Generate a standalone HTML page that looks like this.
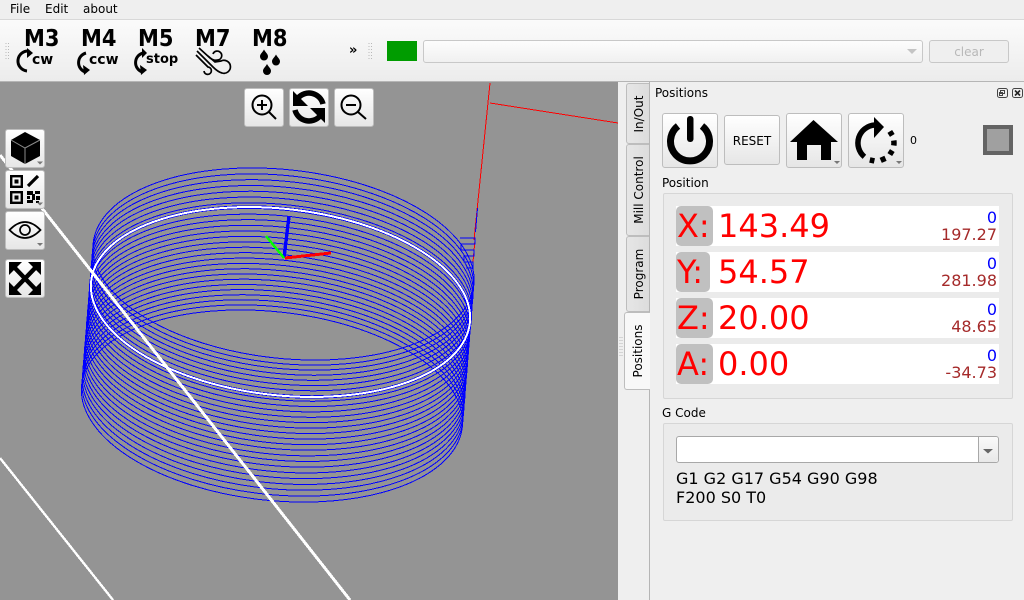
<!DOCTYPE html>
<html><head><meta charset="utf-8"><style>
*{box-sizing:border-box}
html,body{margin:0;padding:0;width:1024px;height:600px;overflow:hidden;background:#efefef;font:12px "DejaVu Sans",sans-serif;color:#000}
.a{position:absolute;white-space:nowrap}
.btn{position:absolute;background:linear-gradient(#fff,#e6e6e6);border:1px solid #bdbdbd;border-radius:3px}
.tab{position:absolute;left:626px;width:24px;background:linear-gradient(90deg,#e6e6e6,#dcdcdc);border:1px solid #bdbdbd;border-right:0;border-radius:3px 0 0 3px}
.tab span{position:absolute;left:50%;top:50%;transform:translate(-50%,-50%) rotate(-90deg);white-space:nowrap}
.grp{position:absolute;left:663px;width:350px;background:#ebebeb;border:1px solid #d6d6d6;border-radius:2px}
.row{position:absolute;left:676px;width:323px;height:40px;background:#fff}
.lab{position:absolute;left:0;top:0;height:40px;width:37px;background:#c0c0c0;border-radius:5px;color:#f00;font-size:32px;line-height:40px;padding-left:1px;white-space:nowrap}
.val{position:absolute;left:42px;top:0;color:#f00;font-size:32px;line-height:40px}
.b{position:absolute;right:2px;top:2px;color:#00f;font-size:16px;line-height:19px}
.m{position:absolute;right:2px;top:19px;color:#a52a2a;font-size:16px;line-height:19px}
.mc{position:absolute;font-weight:bold;font-size:21px;line-height:24px;transform:scaleY(1.12);transform-origin:0 19px}
.sc{position:absolute;font-weight:bold;font-size:14px;line-height:16px}
svg{position:absolute;left:0;top:0}
</style></head><body>
<div class="a" style="left:0;top:0;width:1024px;height:20px;background:#efefef;border-bottom:1px solid #d8d8d8"></div>
<div class="a" style="left:10px;top:2px;line-height:15px">File</div>
<div class="a" style="left:45px;top:2px;line-height:15px">Edit</div>
<div class="a" style="left:83px;top:2px;line-height:15px">about</div>
<div class="a" style="left:0;top:20px;width:1024px;height:62px;background:linear-gradient(#fbfbfb,#ececec);border-bottom:1px solid #b5b5b5"></div>
<div class="mc" style="left:24px;top:27px">M3</div>
<div class="mc" style="left:81px;top:27px">M4</div>
<div class="mc" style="left:138px;top:27px">M5</div>
<div class="mc" style="left:195px;top:27px">M7</div>
<div class="mc" style="left:252px;top:27px">M8</div>
<div class="sc" style="left:32px;top:52px">cw</div>
<div class="sc" style="left:89px;top:52px">ccw</div>
<div class="sc" style="left:146px;top:52px;font-size:13px">stop</div>
<div class="a" style="left:349px;top:43px;font-size:13px;font-weight:bold;line-height:16px">»</div>
<div class="a" style="left:387px;top:41px;width:30px;height:20px;background:#009c00"></div>
<div class="a" style="left:423px;top:40px;width:500px;height:23px;background:linear-gradient(#fdfdfd,#f0f0f0);border:1px solid #c8c8c8;border-radius:3px"></div>
<div class="a" style="left:929px;top:40px;width:80px;height:23px;background:#efefef;border:1px solid #c8c8c8;border-radius:3px;color:#b8b8b8;text-align:center;line-height:22px">clear</div>
<div class="a" style="left:0;top:82px;width:618px;height:518px;background:#949494"></div>
<svg width="1024" height="600" viewBox="0 0 1024 600">
<clipPath id="gl"><rect x="0" y="82" width="618" height="518"/></clipPath>
<g clip-path="url(#gl)" shape-rendering="crispEdges">
<path d="M490 83L474 240M475 240L473 262" stroke="#f00" fill="none"/><path d="M490 103L618 123" stroke="#f00" fill="none"/>
<g fill="none" stroke="#00f" stroke-width="1">
<ellipse transform="translate(283.5 264) rotate(6.3)" rx="191.500" ry="94.300"/>
<ellipse transform="translate(283.1 269.5) rotate(6.3)" rx="191.500" ry="93.860"/>
<ellipse transform="translate(282.6 274.9) rotate(6.3)" rx="191.500" ry="93.450"/>
<ellipse transform="translate(282.2 280.4) rotate(6.3)" rx="191.500" ry="93.080"/>
<ellipse transform="translate(281.7 285.8) rotate(6.3)" rx="191.500" ry="92.740"/>
<ellipse transform="translate(281.3 291.3) rotate(6.3)" rx="191.500" ry="92.440"/>
<ellipse transform="translate(280.9 296.8) rotate(6.3)" rx="191.500" ry="92.170"/>
<ellipse transform="translate(280.4 302.2) rotate(6.3)" rx="191.500" ry="91.940"/>
<ellipse transform="translate(280 307.7) rotate(6.3)" rx="191.500" ry="91.740"/>
<ellipse transform="translate(279.5 313.1) rotate(6.3)" rx="191.500" ry="91.590"/>
<ellipse transform="translate(279.1 318.6) rotate(6.3)" rx="191.500" ry="91.460"/>
<ellipse transform="translate(278.7 324.1) rotate(6.3)" rx="191.500" ry="91.370"/>
<ellipse transform="translate(278.2 329.5) rotate(6.3)" rx="191.500" ry="91.320"/>
<ellipse transform="translate(277.8 335) rotate(6.3)" rx="191.500" ry="91.300"/>
<ellipse transform="translate(277.3 340.4) rotate(6.3)" rx="191.500" ry="91.320"/>
<ellipse transform="translate(276.9 345.9) rotate(6.3)" rx="191.500" ry="91.370"/>
<ellipse transform="translate(276.5 351.4) rotate(6.3)" rx="191.500" ry="91.460"/>
<ellipse transform="translate(276 356.8) rotate(6.3)" rx="191.500" ry="91.590"/>
<ellipse transform="translate(275.6 362.3) rotate(6.3)" rx="191.500" ry="91.740"/>
<ellipse transform="translate(275.1 367.7) rotate(6.3)" rx="191.500" ry="91.940"/>
<ellipse transform="translate(274.7 373.2) rotate(6.3)" rx="191.500" ry="92.170"/>
<ellipse transform="translate(274.3 378.7) rotate(6.3)" rx="191.500" ry="92.440"/>
<ellipse transform="translate(273.8 384.1) rotate(6.3)" rx="191.500" ry="92.740"/>
<ellipse transform="translate(273.4 389.6) rotate(6.3)" rx="191.500" ry="93.080"/>
<ellipse transform="translate(272.9 395) rotate(6.3)" rx="191.500" ry="93.450"/>
<ellipse transform="translate(272.5 400.5) rotate(6.3)" rx="191.500" ry="93.860"/>
<ellipse transform="translate(272 406) rotate(6.3)" rx="191.500" ry="94.300"/>
<ellipse transform="translate(280.5 302) rotate(6.3)" rx="190.500" ry="93.200" stroke-width="3.400"/>
</g>
<path d="M460 238H475V244H461V250H474V256H464V262H473V268H466" stroke="#00f" fill="none"/>
<path d="M477.500 208L475.500 232" stroke="#00f" fill="none"/>
<ellipse transform="translate(280.5 302) rotate(6.3)" rx="190.500" ry="93.200" fill="none" stroke="#fff" stroke-width="2"/>
<path d="M0 155L350 600" stroke="#fff" stroke-width="3" fill="none"/><path d="M0 458L113 600" stroke="#fff" stroke-width="2.400" fill="none"/>
<path d="M284 258L289 216" stroke="#00f" stroke-width="3.400"/><path d="M284 258L266 236" stroke="#0f0" stroke-width="2.400"/><path d="M285 258L331 253" stroke="#f00" stroke-width="3"/>
</g>
</svg>
<div class="btn" style="left:244px;top:88px;width:40px;height:39px"></div>
<div class="btn" style="left:289px;top:88px;width:40px;height:39px"></div>
<div class="btn" style="left:334px;top:88px;width:40px;height:39px"></div>
<div class="btn" style="left:5px;top:129px;width:40px;height:39px"></div>
<div class="btn" style="left:5px;top:170px;width:40px;height:39px"></div>
<div class="btn" style="left:5px;top:211px;width:40px;height:39px"></div>
<div class="btn" style="left:5px;top:259px;width:40px;height:39px"></div>
<div class="tab" style="top:83px;height:61px"><span>In/Out</span></div>
<div class="tab" style="top:144px;height:92px"><span>Mill Control</span></div>
<div class="tab" style="top:236px;height:76px"><span>Program</span></div>
<div class="a" style="left:649px;top:82px;width:1px;height:518px;background:#b5b5b5"></div>
<div class="tab" style="left:624px;top:312px;width:26px;height:78px;background:#f8f8f8"><span>Positions</span></div>
<div class="a" style="left:655px;top:86px;line-height:15px">Positions</div>
<div class="btn" style="left:662px;top:113px;width:56px;height:55px"></div>
<div class="btn" style="left:724px;top:115px;width:56px;height:50px;text-align:center;line-height:50px">RESET</div>
<div class="btn" style="left:786px;top:113px;width:56px;height:55px"></div>
<div class="btn" style="left:848px;top:113px;width:56px;height:55px"></div>
<div class="a" style="left:910px;top:134px;font-size:11px;line-height:14px">0</div>
<div class="a" style="left:983px;top:125px;width:30px;height:30px;background:#a0a0a0;border:4px solid #646464"></div>
<div class="a" style="left:662px;top:176px;line-height:15px">Position</div>
<div class="grp" style="top:193px;height:206px"></div>
<div class="row" style="top:206px"><div class="lab">X:</div><div class="val">143.49</div><div class="b">0</div><div class="m">197.27</div></div>
<div class="row" style="top:252px"><div class="lab" style="width:34px">Y:</div><div class="val">54.57</div><div class="b">0</div><div class="m">281.98</div></div>
<div class="row" style="top:298px"><div class="lab">Z:</div><div class="val">20.00</div><div class="b">0</div><div class="m">48.65</div></div>
<div class="row" style="top:344px"><div class="lab">A:</div><div class="val">0.00</div><div class="b">0</div><div class="m">-34.73</div></div>
<div class="a" style="left:662px;top:406px;line-height:15px">G Code</div>
<div class="grp" style="top:423px;height:98px"></div>
<div class="a" style="left:676px;top:436px;width:323px;height:27px;background:#fff;border:1px solid #a8a8a8;border-radius:3px"></div>
<div class="a" style="left:978px;top:437px;width:20px;height:25px;background:linear-gradient(#fafafa,#e8e8e8);border-left:1px solid #a8a8a8;border-radius:0 3px 3px 0"></div>
<div class="a" style="left:676px;top:469px;font-size:16px;line-height:19px">G1 G2 G17 G54 G90 G98<br>F200 S0 T0</div>
<svg width="1024" height="600" viewBox="0 0 1024 600">
<path d="M6 43V60M8.500 43V60M369 43V60M371.500 43V60" stroke="#b9b9b9" stroke-width="1" stroke-dasharray="1 2" fill="none"/>
<path d="M620 337V358M622 337V358" stroke="#b9b9b9" stroke-width="1" stroke-dasharray="1 2" fill="none"/>
<!-- m3 -->
<path d="M29 51A10 10 0 0 0 27 71" stroke="#000" stroke-width="3" fill="none"/><path d="M27 48L33 53L27 58Z"/>
<!-- m4 -->
<path d="M86 53A10 10 0 0 0 85 72" stroke="#000" stroke-width="3" fill="none"/><path d="M84 75L90 70L83 65Z"/>
<!-- m5 -->
<path d="M143 53A10 10 0 0 0 142 72" stroke="#000" stroke-width="3" fill="none"/><path d="M142 48L147 53L142 58Z"/><path d="M141 75L147 70L140 65Z"/>
<!-- m7 -->
<g fill="none" stroke="#000" stroke-width="1.700">
<path d="M199 48L210 58Q214 61 218 60A4.500 4.500 0 1 0 213 54"/>
<path d="M197 51L213 67Q218 72 222 73A6.500 6.500 0 1 0 221 61L215 62L208 56"/>
<path d="M196 55L208 67A3.700 3.700 0 1 1 204 71"/>
</g>
<!-- m8 -->
<path d="M264 49.500C266 53 268 54 268 56.500A4 4 0 0 1 260 56.500C260 54 262 53 264 49.500ZM276 54.500C278 58 280 59 280 61.500A4 4 0 0 1 272 61.500C272 59 274 58 276 54.500ZM267 64C269 67.500 271 68.500 271 71A4 4 0 0 1 263 71C263 68.500 265 67.500 267 64Z"/>
<path d="M907 49H917L912 54Z" fill="#c4c4c4"/>
<!-- zoom / refresh -->
<g fill="none" stroke="#000"><circle cx="262" cy="105" r="9.500" stroke-width="2"/><path d="M269 112L276 119M262 100V110M257 105H267" stroke-width="2"/>
<circle cx="351" cy="105" r="9.500" stroke-width="2"/><path d="M358 112L366 119M346 105H356" stroke-width="2"/>
<path d="M298 98A14.500 14.500 0 0 1 323 104M320 116A14.500 14.500 0 0 1 295 110" stroke-width="5.500"/></g>
<path d="M293 91V106H308ZM325 123V108H310Z"/>
<!-- cube -->
<path d="M25 132L40 140V156L25 164L11 156V140Z"/><path d="M11 140L25 148L40 140M25 148V164" stroke="#8a8a8a" stroke-width="1" fill="none"/>
<!-- qr -->
<g fill="none" stroke="#000" stroke-width="2.400"><rect x="11.200" y="176.200" width="10.600" height="10.600"/><rect x="11.200" y="192.200" width="10.600" height="10.600"/></g>
<path d="M14.500 179.500h4v4h-4zM14.500 195.500h4v4h-4zM27 191h6v4h-6zM35 191h5v3h-5zM27 196h3v3h-3zM32 194h3v6h-3zM36 196h4v4h-4zM27 200h6v3h-6zM36 201h3v2h-3z"/>
<path d="M28 186L38 176" stroke="#000" stroke-width="3.200" fill="none"/>
<!-- eye -->
<path d="M9.500 230Q25 214 40.500 230Q25 246 9.500 230Z" fill="none" stroke="#000" stroke-width="1.700"/><circle cx="25" cy="230" r="5" fill="none" stroke="#000" stroke-width="1.700"/>
<!-- expand -->
<path d="M13 266L37 291M37 266L13 291" stroke="#000" stroke-width="4.500"/><path d="M9 262H22L9 275ZM41 262H28L41 275ZM9 295H22L9 282ZM41 295H28L41 282Z"/>
<!-- dropdown arrows -->
<path d="M37 161.500H43L40 164.500ZM37 202.500H43L40 205.500ZM37 243H43L40 246ZM834 161H840L837 164ZM896 161H902L899 164Z" fill="#777"/>
<path d="M983 449H993L988 453.500Z" fill="#666"/>
<!-- power -->
<path d="M678 126A19.500 19.500 0 1 0 702 126" fill="none" stroke="#000" stroke-width="7"/><rect x="687" y="116" width="6.500" height="26" rx="3"/>
<!-- home -->
<path d="M813.500 120L838 142H831V160H821V145H807V160H797V142H790Z"/>
<!-- rotate -->
<g fill="none" stroke="#000" stroke-width="5.500"><path d="M875 125A18 18 0 0 0 864.400 156.800"/><path d="M889.800 131.400L892.300 135.400M893.800 140.500A18 18 0 0 1 893.800 145.500M892.300 150.600L889.800 154.600M885.500 158.300L880.700 160.400M874.400 160.900L869.800 159.900"/></g>
<path d="M874 117L884 127L874 138Z"/>
<!-- dock -->
<g fill="none" stroke="#444" stroke-width="1"><rect x="997.500" y="88.500" width="10" height="9" rx="2"/><rect x="1000.500" y="90.500" width="4" height="3"/><rect x="999.500" y="92.500" width="3" height="3"/><rect x="1012.500" y="88.500" width="10" height="9" rx="2"/></g>
<path d="M1015 90.500L1020 95.500M1020 90.500L1015 95.500" stroke="#222" stroke-width="1.600"/>
</svg>
</body></html>
